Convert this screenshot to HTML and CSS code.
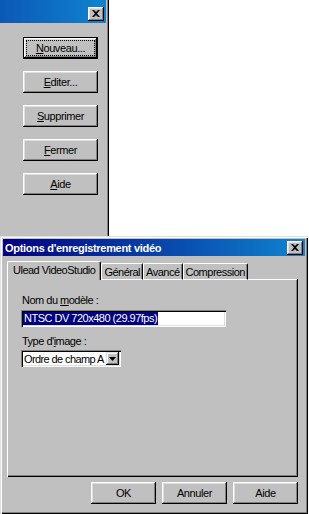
FILE: index.html
```html
<!DOCTYPE html>
<html lang="fr">
<head>
<meta charset="utf-8">
<title>Options</title>
<link rel="stylesheet" href="styles.css">
</head>
<body>
<div class="screen">
  <div class="win top-win">
    <div class="cap-top">
      <span class="close-btn"><svg width="8" height="7" viewBox="0 0 8 7"><path d="M0 0h2l2 2 2-2h2L5 3.5 8 7H6L4 5 2 7H0l3-3.5z" fill="#000"/></svg></span>
    </div>
    <div class="btn-col">
      <button class="btn btn-default"><span class="focus"><u>N</u>ouveau...</span></button>
      <button class="btn"><u>E</u>diter...</button>
      <button class="btn"><u>S</u>upprimer</button>
      <button class="btn"><u>F</u>ermer</button>
      <button class="btn"><u>A</u>ide</button>
    </div>
  </div>
  <div class="win dialog">
    <div class="cap-dlg">
      <span class="title">Options d'enregistrement vidéo</span>
      <span class="close-btn"><svg width="8" height="7" viewBox="0 0 8 7"><path d="M0 0h2l2 2 2-2h2L5 3.5 8 7H6L4 5 2 7H0l3-3.5z" fill="#000"/></svg></span>
    </div>
    <div class="tabs">
      <span class="tab tab-active">Ulead VideoStudio</span>
      <span class="tab">Général</span>
      <span class="tab">Avancé</span>
      <span class="tab">Compression</span>
      <span class="tab-fill"></span>
    </div>
    <div class="panel">
      <div class="label">Nom du <u>m</u>odèle :</div>
      <div class="field"><span class="sel">NTSC DV 720x480 (29.97fps)</span></div>
      <div class="label label-2">Type d'<u>i</u>mage :</div>
      <div class="combo">
        <span class="combo-text">Ordre de champ A</span>
        <span class="combo-arrow"><svg width="7" height="4" viewBox="0 0 7 4"><path d="M0 0h7L3.5 4z" fill="#000"/></svg></span>
      </div>
    </div>
    <div class="actions">
      <button class="btn btn-sm">OK</button>
      <button class="btn btn-sm">Annuler</button>
      <button class="btn btn-sm">Aide</button>
    </div>
  </div>
</div>
</body>
</html>
```
FILE: styles.css
```css
* { box-sizing: border-box; }
html, body { margin: 0; padding: 0; }
body {
  background: #fff;
  font-family: "Liberation Sans", Arial, sans-serif;
  font-size: 11px;
  color: #000;
}
.screen {
  width: 309px;
  height: 514px;
  overflow: hidden;
  display: flex;
  flex-direction: column;
}
.win { background-color: #c0c0c0; }

/* top window */
.top-win {
  width: 109px;
  height: 236px;
  flex: none;
  padding-right: 3px;
  box-shadow: inset -1px 0 #000, inset -2px 0 #808080;
  display: flex;
  flex-direction: column;
}
.cap-top {
  flex: none;
  width: 106px;
  height: 23px;
  background-color: #0f5fc4;
  background-image: linear-gradient(to right, #0b58b6, #1084d0);
  display: flex;
  justify-content: flex-end;
  align-items: flex-end;
  padding: 0 2px 2px 0;
}
.close-btn {
  width: 16px;
  height: 14px;
  background: #c0c0c0;
  box-shadow: inset -1px -1px #000, inset 1px 1px #fff, inset -2px -2px #808080, inset 2px 2px #dfdfdf;
  display: flex;
  align-items: center;
  justify-content: center;
  padding: 0 1px 1px 0;
}
.btn-col {
  display: flex;
  flex-direction: column;
  gap: 12px;
  padding: 14px 0 0 23px;
}
.btn {
  width: 75px;
  height: 22px;
  border: none;
  margin: 0;
  padding: 0;
  background: #c0c0c0;
  font: inherit;
  letter-spacing: -0.4px;
  color: #000;
  box-shadow: inset -1px -1px #000, inset 1px 1px #fff, inset -2px -2px #808080, inset 2px 2px #dfdfdf;
  display: flex;
  align-items: center;
  justify-content: center;
}
.btn-default {
  box-shadow: inset 0 0 0 1px #000, inset -2px -2px #000, inset 2px 2px #fff, inset -3px -3px #808080, inset 3px 3px #dfdfdf;
  padding: 3px;
}
.focus {
  flex: 1;
  align-self: stretch;
  border: 1px dotted #000;
  display: flex;
  align-items: center;
  justify-content: center;
}
u { text-decoration: underline; text-underline-offset: 1px; }

/* dialog */
.dialog {
  width: 308px;
  height: 278px;
  flex: none;
  padding: 3px;
  box-shadow: inset 1px 1px #dfdfdf, inset 2px 2px #fff, inset -1px -1px #000, inset -2px -2px #808080;
  display: flex;
  flex-direction: column;
}
.cap-dlg {
  flex: none;
  height: 17px;
  background: linear-gradient(to right, #000080 0%, #1084d0 100%);
  display: flex;
  align-items: center;
  justify-content: space-between;
  padding: 0 2px;
}
.title {
  color: #fff;
  font-weight: bold;
  letter-spacing: -0.3px;
}
.tabs {
  margin: 5px 7px 0 4px;
  height: 19px;
  display: flex;
  align-items: flex-end;
}
.tab {
  height: 17px;
  padding: 0 2px;
  border-top: 1px solid #fff;
  border-left: 1px solid #fff;
  border-right: 1px solid #000;
  border-bottom: 1px solid #fff;
  border-radius: 2px 2px 0 0;
  box-shadow: inset -1px 0 #808080;
  display: flex;
  align-items: center;
  letter-spacing: -0.5px;
  white-space: nowrap;
}
.tab-active {
  height: 19px;
  padding: 0 5px 2px 5px;
  border-bottom: none;
}
.tab-fill {
  flex: 1;
  height: 1px;
  background: #fff;
  box-shadow: inset -1px 0 #000;
}
.panel {
  flex: 1;
  margin: 0 7px 0 4px;
  padding: 14px 0 0 14px;
  box-shadow: inset 1px 0 #fff, inset -1px -1px #000, inset -2px -2px #808080;
  display: flex;
  flex-direction: column;
  align-items: flex-start;
}
.label {
  height: 13px;
  line-height: 13px;
  padding-left: 1px;
  letter-spacing: -0.5px;
}
.label-2 { margin-top: 8px; }
.field {
  margin-top: 3px;
  width: 205px;
  height: 17px;
  background: #fff;
  box-shadow: inset 1px 1px #808080, inset 2px 2px #000, inset -1px -1px #fff, inset -2px -2px #dfdfdf;
  padding: 2px;
  display: flex;
}
.sel {
  background: #000080;
  color: #fff;
  line-height: 13px;
  letter-spacing: -0.5px;
  padding: 0 1px;
}
.combo {
  margin-top: 2px;
  width: 100px;
  height: 17px;
  background: #fff;
  box-shadow: inset 1px 1px #808080, inset 2px 2px #000, inset -1px -1px #fff, inset -2px -2px #dfdfdf;
  padding: 2px;
  display: flex;
  align-items: center;
  justify-content: space-between;
}
.combo-text {
  padding-left: 1px;
  letter-spacing: -0.6px;
  white-space: nowrap;
}
.combo-arrow {
  width: 13px;
  height: 13px;
  background: #c0c0c0;
  box-shadow: inset -1px -1px #000, inset 1px 1px #dfdfdf, inset -2px -2px #808080, inset 2px 2px #fff;
  display: flex;
  align-items: center;
  justify-content: center;
}
.actions {
  margin: 5px 7px 7px 0;
  display: flex;
  justify-content: flex-end;
  gap: 6px;
}
.btn-sm { width: 65px; }
```
